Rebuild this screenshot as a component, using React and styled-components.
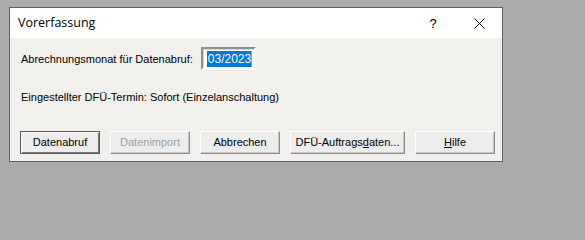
import React from 'react';
import styled, { createGlobalStyle } from 'styled-components';

const GlobalStyle = createGlobalStyle`
  body {
    margin: 0;
    background-color: #ababab;
    font-family: 'Liberation Sans', sans-serif;
  }
`;

const Page = styled.div`
  padding: 7px 0 0 9px;
`;

const Dialog = styled.div`
  width: 492px;
  height: 153px;
  border: 1px solid #5f5f5f;
  background-color: #f1f0ed;
  display: flex;
  flex-direction: column;
`;

const TitleBar = styled.div`
  height: 30px;
  background-color: #ffffff;
  display: flex;
  align-items: center;
  padding-left: 8px;
`;

const Title = styled.div`
  flex: 1;
  font-family: 'Open Sans', 'Noto Sans', sans-serif;
  font-size: 12.5px;
  color: #000;
  padding-bottom: 1px;
`;

const TitleButton = styled.div`
  width: ${props => props.width}px;
  height: 30px;
  display: flex;
  align-items: center;
  justify-content: center;
  font-family: 'Liberation Sans', sans-serif;
  font-size: 13px;
  color: #000;
`;

const Content = styled.div`
  flex: 1;
  display: flex;
  flex-direction: column;
  padding: 9px 0 0 11px;
  font-family: 'Liberation Sans', sans-serif;
  font-size: 11px;
  color: #000;
`;

const FieldRow = styled.div`
  display: flex;
  align-items: center;
  gap: 8px;
  height: 23px;
`;

const TextField = styled.div`
  box-sizing: border-box;
  width: 55px;
  height: 23px;
  border-style: solid;
  border-width: 2px;
  border-color: #8f8f8f #ffffff #ffffff #8f8f8f;
  box-shadow: inset 1px 1px 0 #d8d8d8;
  background-color: #ffffff;
  display: flex;
  align-items: center;
  padding-left: 4px;
`;

const Selected = styled.span`
  background-color: #0078d7;
  color: #ffffff;
  line-height: 16px;
  padding: 0 0 0 1px;
  border-right: 1px solid #ff8a00;
  font-size: 12px;
`;

const InfoLine = styled.div`
  margin-top: 15px;
  height: 23px;
  display: flex;
  align-items: center;
`;

const ButtonRow = styled.div`
  display: flex;
  gap: 10px;
  margin-top: 23px;
  margin-left: -1px;
`;

const Button = styled.div`
  box-sizing: border-box;
  width: ${props => props.width || 80}px;
  height: 23px;
  display: flex;
  align-items: center;
  justify-content: center;
  background-color: #ededed;
  color: ${props => (props.disabled ? '#a0a0a0' : '#000')};
  border: 1px solid;
  border-color: ${props =>
    props.primary ? '#5a5a5a' : '#ffffff #8c8c8c #8c8c8c #ffffff'};
  box-shadow: ${props =>
    props.primary
      ? 'inset 1px 1px 0 #ffffff, inset -1px -1px 0 #7a7a7a'
      : 'inset -1px -1px 0 #c8c8c8'};
  padding-bottom: 1px;

  u {
    text-decoration: underline;
    text-underline-offset: 1px;
  }
`;

const App = () => {
  return (
    <>
      <GlobalStyle />
      <Page>
        <Dialog>
          <TitleBar>
            <Title>Vorerfassung</Title>
            <TitleButton width={46}>?</TitleButton>
            <TitleButton width={46}>
              <svg width="11" height="11" viewBox="0 0 11 11">
                <path d="M0.5 0.5 L10.5 10.5 M10.5 0.5 L0.5 10.5" stroke="#000" strokeWidth="1" />
              </svg>
            </TitleButton>
          </TitleBar>
          <Content>
            <FieldRow>
              <span>Abrechnungsmonat für Datenabruf:</span>
              <TextField>
                <Selected>03/2023</Selected>
              </TextField>
            </FieldRow>
            <InfoLine>Eingestellter DFÜ-Termin: Sofort (Einzelanschaltung)</InfoLine>
            <ButtonRow>
              <Button primary>Datenabruf</Button>
              <Button disabled>Datenimport</Button>
              <Button>Abbrechen</Button>
              <Button width={115}>
                <span>
                  DFÜ-Auftrags<u>d</u>aten...
                </span>
              </Button>
              <Button>
                <span>
                  <u>H</u>ilfe
                </span>
              </Button>
            </ButtonRow>
          </Content>
        </Dialog>
      </Page>
    </>
  );
};

export default App;
